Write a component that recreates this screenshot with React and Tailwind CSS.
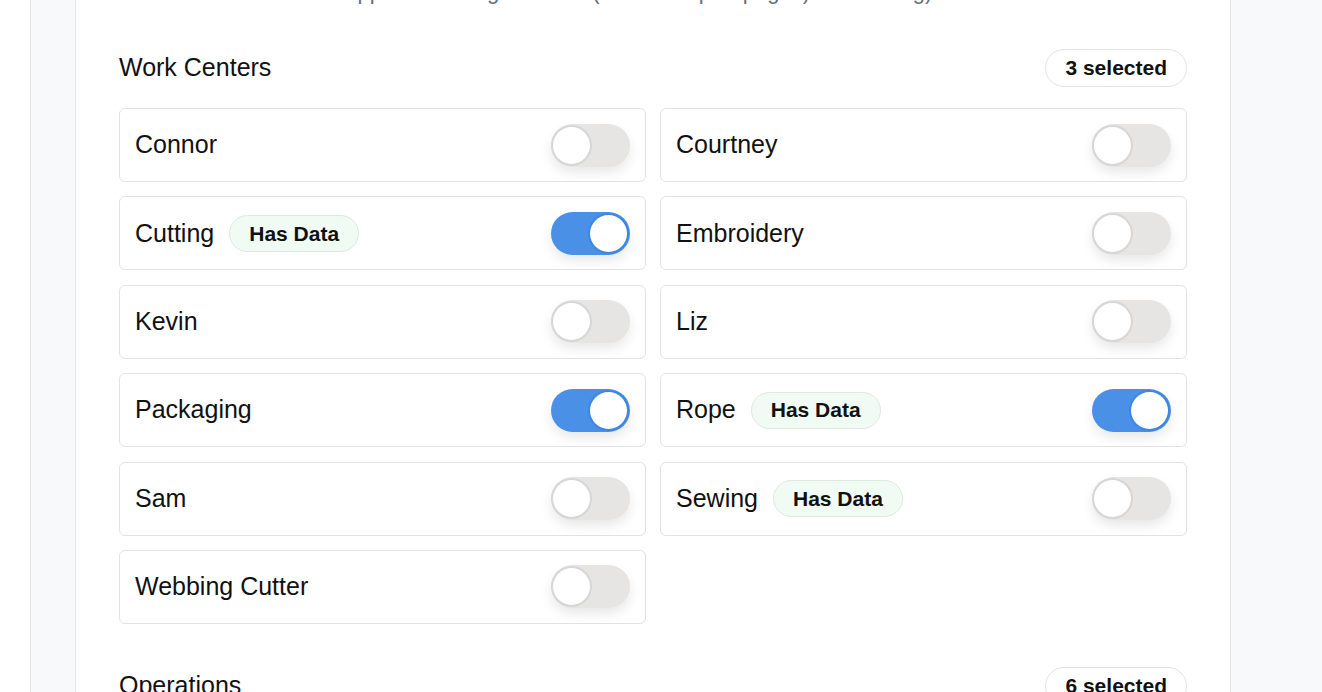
import React from "react";

const workCenters = [
  { name: "Connor", on: false },
  { name: "Courtney", on: false },
  { name: "Cutting", on: true, data: true },
  { name: "Embroidery", on: false },
  { name: "Kevin", on: false },
  { name: "Liz", on: false },
  { name: "Packaging", on: true },
  { name: "Rope", on: true, data: true },
  { name: "Sam", on: false },
  { name: "Sewing", on: false, data: true },
  { name: "Webbing Cutter", on: false },
];

function Toggle({ on }) {
  return (
    <div
      className={
        "relative w-[79px] h-[43px] rounded-full shrink-0 shadow-[0_6px_12px_rgba(0,0,0,0.09)] " +
        (on ? "bg-[#4a90e6]" : "bg-[#e6e5e4]")
      }
    >
      <div
        className={
          "absolute top-[3px] w-[37px] h-[37px] rounded-full bg-white " +
          (on
            ? "right-[3px] shadow-[0_0_0_2px_#3d86e3]"
            : "left-[2px] shadow-[0_0_0_2px_#d6d6d6]")
        }
      />
    </div>
  );
}

function Pill({ children, green }) {
  return (
    <span
      className={
        "inline-flex items-center rounded-full border text-[21px] font-bold text-[#111] px-[19px] " +
        (green
          ? "h-[37px] bg-[#f0fbf3] border-[#dde8e0]"
          : "h-[38px] bg-white border-[#e3e3e3]")
      }
    >
      {children}
    </span>
  );
}

function Row({ item }) {
  return (
    <div className="h-[74px] rounded-[6px] border border-[#e2e2e2] bg-white px-[15px] flex items-center justify-between">
      <div className="flex items-center gap-[15px]">
        <span className="text-[25px] text-[#111]">{item.name}</span>
        {item.data && <Pill green>Has Data</Pill>}
      </div>
      <Toggle on={item.on} />
    </div>
  );
}

function Header({ title, count }) {
  return (
    <div className="flex items-center justify-between h-[38px]">
      <h2 className="text-[25px] text-[#111] font-normal">{title}</h2>
      <Pill>{count}</Pill>
    </div>
  );
}

export default function App() {
  return (
    <div
      className="h-[692px] w-[1322px] overflow-hidden flex bg-white"
      style={{ fontFamily: "'Liberation Sans', Arial, Helvetica, sans-serif" }}
    >
      <div className="w-[31px] shrink-0 bg-white border-r border-[#e6e6e6]" />
      <div className="flex-1 bg-[#f8f9fb] pl-[44px]">
        <div className="w-[1156px] h-full flex flex-col bg-white border-x border-[#e6e6e6] px-[43px]">
          <p className="mt-[-23px] text-[22px] leading-[30px] text-[#6b6f76] whitespace-nowrap">
            Choose which stations appear on the grid board (and the report pages) for tracking)
          </p>
          <div className="mt-[42px]">
            <Header title="Work Centers" count="3 selected" />
            <div className="mt-[21px] grid grid-cols-2 gap-x-[14px] gap-y-[14.4px]">
              {workCenters.map((w) => (
                <Row key={w.name} item={w} />
              ))}
            </div>
          </div>
          <div className="mt-[43px] shrink-0">
            <Header title="Operations" count="6 selected" />
          </div>
        </div>
      </div>
    </div>
  );
}
